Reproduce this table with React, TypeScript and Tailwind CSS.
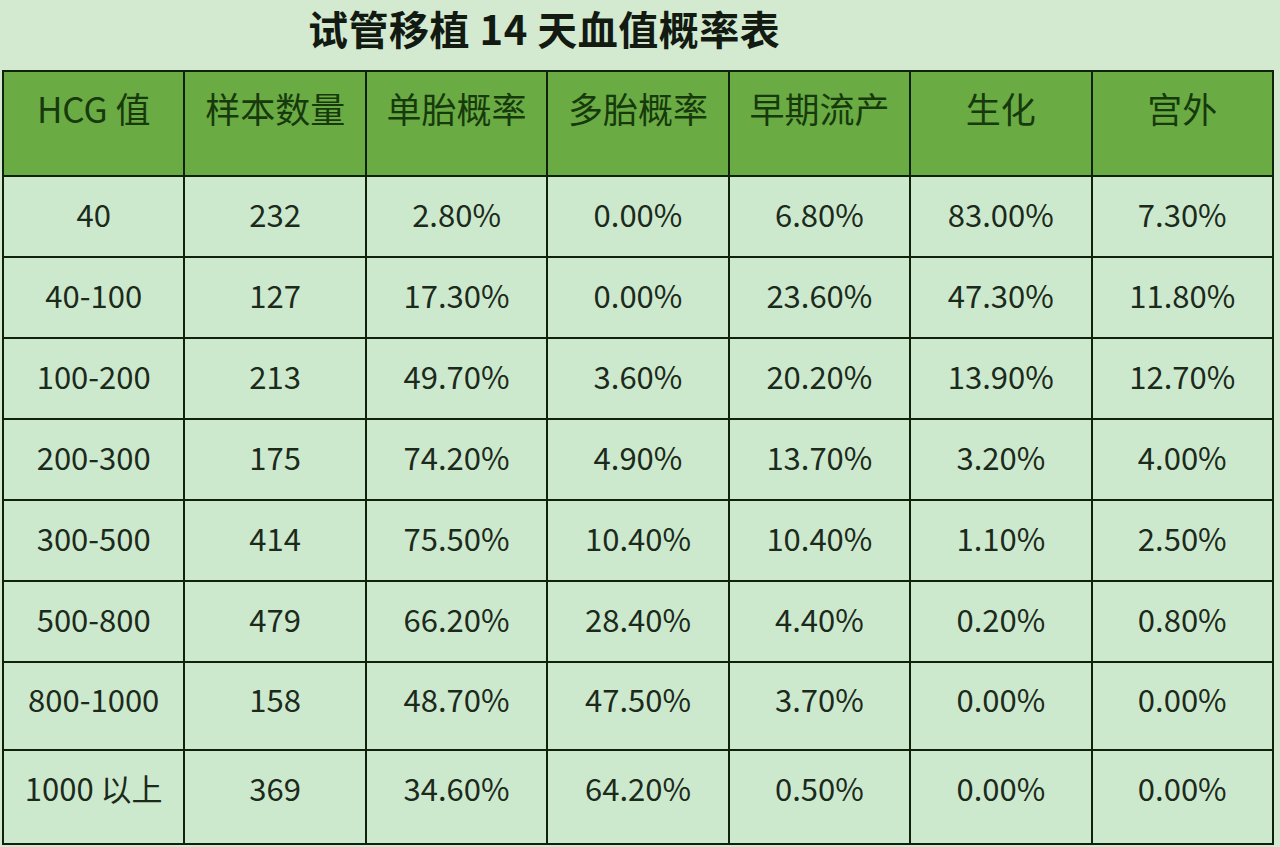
import React from "react";

const headers = ["HCG 值", "样本数量", "单胎概率", "多胎概率", "早期流产", "生化", "宫外"];

const rows: string[][] = [
  ["40", "232", "2.80%", "0.00%", "6.80%", "83.00%", "7.30%"],
  ["40-100", "127", "17.30%", "0.00%", "23.60%", "47.30%", "11.80%"],
  ["100-200", "213", "49.70%", "3.60%", "20.20%", "13.90%", "12.70%"],
  ["200-300", "175", "74.20%", "4.90%", "13.70%", "3.20%", "4.00%"],
  ["300-500", "414", "75.50%", "10.40%", "10.40%", "1.10%", "2.50%"],
  ["500-800", "479", "66.20%", "28.40%", "4.40%", "0.20%", "0.80%"],
  ["800-1000", "158", "48.70%", "47.50%", "3.70%", "0.00%", "0.00%"],
  ["1000 以上", "369", "34.60%", "64.20%", "0.50%", "0.00%", "0.00%"],
];

const rowClasses = [
  "h-[81px]",
  "h-[81px]",
  "h-[81px]",
  "h-[81px]",
  "h-[81px]",
  "h-[81px]",
  "h-[88px]",
  "h-[94px]",
];

const cellPad = ["pb-[5px]", "pb-[5px]", "pb-[5px]", "pb-[5px]", "pb-[5px]", "pb-[5px]", "pb-[14px]", "pb-[18px]"];

export default function App() {
  return (
    <div
      className="w-[1280px] h-[847px] bg-[#d3ead1] overflow-hidden"
      style={{ fontFamily: '"Noto Sans CJK SC", "Noto Sans", sans-serif' }}
    >
      <div className="h-[70px] pl-[308px]">
        <h1 className="text-[40px] leading-[56px] font-bold text-[#121a12] tracking-[0.5px]">
          试管移植 14 天血值概率表
        </h1>
      </div>
      <table className="ml-[2px] w-[1272px] table-fixed border-collapse border-2 border-[#10220d]">
        <thead>
          <tr className="h-[105px] bg-[#6aab44]">
            {headers.map((h, i) => (
              <th
                key={i}
                className="border-2 border-[#10220d] text-center align-middle pb-[30px] text-[35px] font-normal text-[#173a0c]"
              >
                {h}
              </th>
            ))}
          </tr>
        </thead>
        <tbody>
          {rows.map((r, ri) => (
            <tr key={ri} className={`${rowClasses[ri]} bg-[#cde9cd]`}>
              {r.map((c, ci) => (
                <td
                  key={ci}
                  className={`border-2 border-[#10220d] text-center align-middle text-[31px] text-[#1c2a1c] ${cellPad[ri]}`}
                >
                  {c}
                </td>
              ))}
            </tr>
          ))}
        </tbody>
      </table>
    </div>
  );
}
